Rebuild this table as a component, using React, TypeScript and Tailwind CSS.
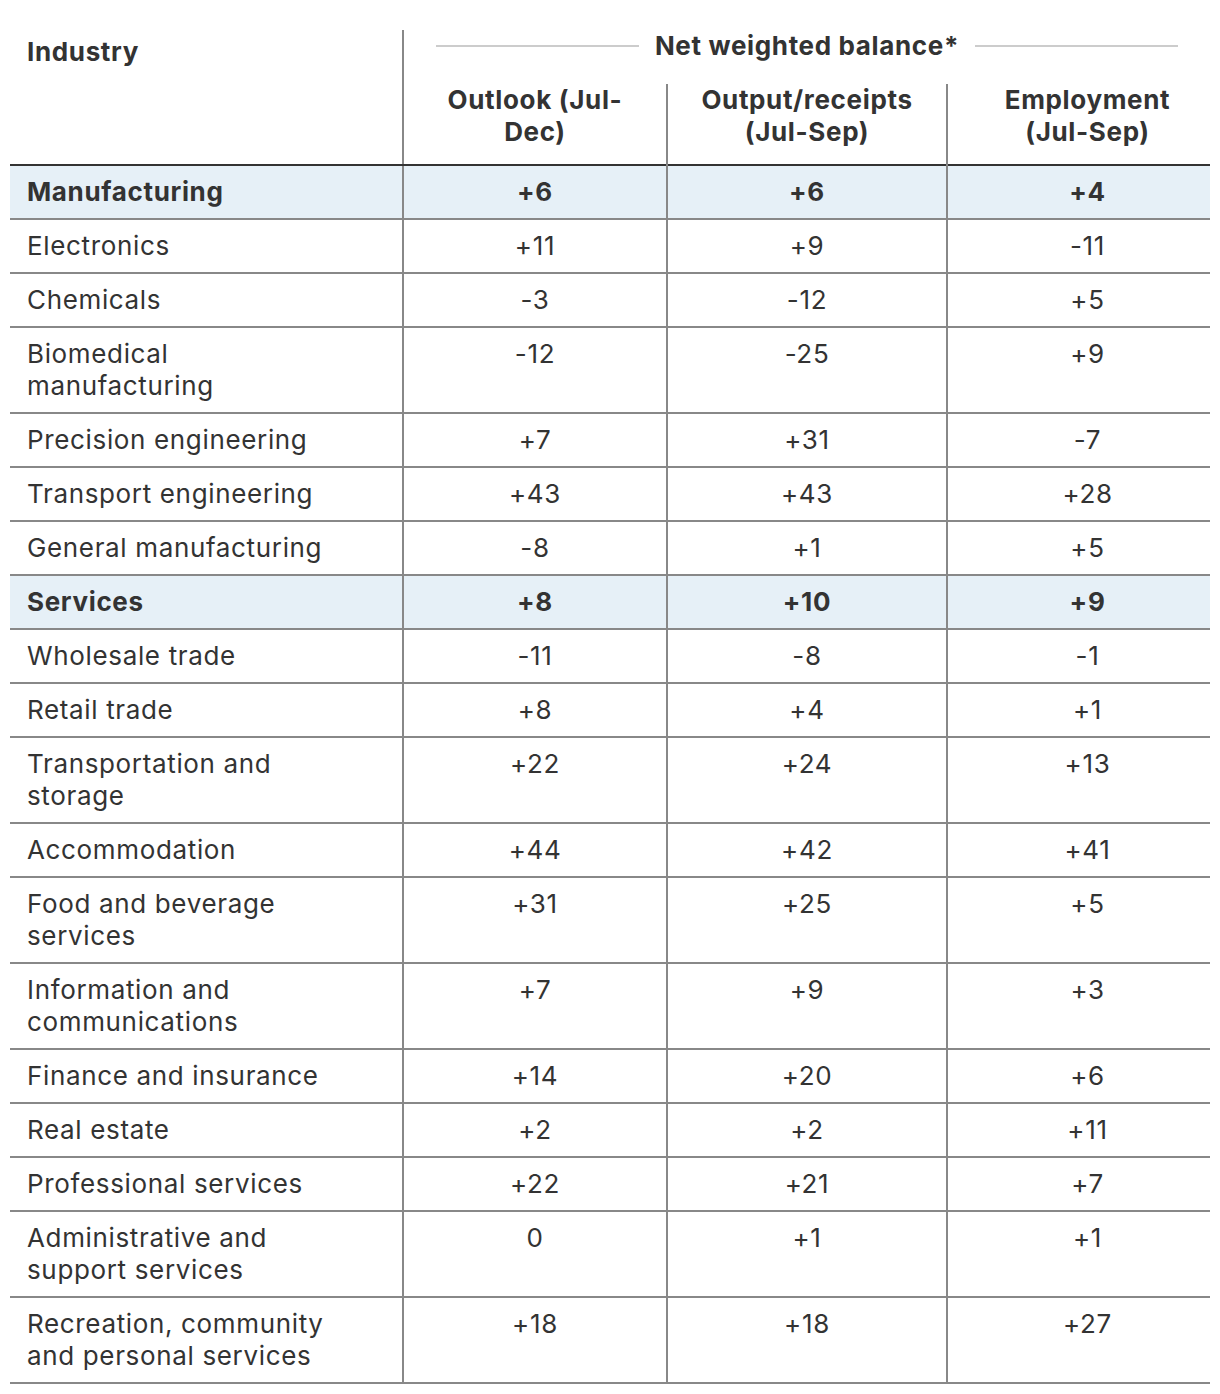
import React from 'react';

type Row = {
  name: string;
  values: [string, string, string];
  group?: boolean;
};

// names carry their own line breaks so wrapping matches the source table
const rows: Row[] = [
  { name: 'Manufacturing', values: ['+6', '+6', '+4'], group: true },
  { name: 'Electronics', values: ['+11', '+9', '-11'] },
  { name: 'Chemicals', values: ['-3', '-12', '+5'] },
  { name: 'Biomedical\nmanufacturing', values: ['-12', '-25', '+9'] },
  { name: 'Precision engineering', values: ['+7', '+31', '-7'] },
  { name: 'Transport engineering', values: ['+43', '+43', '+28'] },
  { name: 'General manufacturing', values: ['-8', '+1', '+5'] },
  { name: 'Services', values: ['+8', '+10', '+9'], group: true },
  { name: 'Wholesale trade', values: ['-11', '-8', '-1'] },
  { name: 'Retail trade', values: ['+8', '+4', '+1'] },
  { name: 'Transportation and\nstorage', values: ['+22', '+24', '+13'] },
  { name: 'Accommodation', values: ['+44', '+42', '+41'] },
  { name: 'Food and beverage\nservices', values: ['+31', '+25', '+5'] },
  { name: 'Information and\ncommunications', values: ['+7', '+9', '+3'] },
  { name: 'Finance and insurance', values: ['+14', '+20', '+6'] },
  { name: 'Real estate', values: ['+2', '+2', '+11'] },
  { name: 'Professional services', values: ['+22', '+21', '+7'] },
  { name: 'Administrative and\nsupport services', values: ['0', '+1', '+1'] },
  { name: 'Recreation, community\nand personal services', values: ['+18', '+18', '+27'] },
];

export default function App() {
  return (
    <div className="min-h-[1394px] bg-white pt-[30px] px-[10px] text-[#333] text-[26px] leading-[32px] tracking-[0.025em] font-['Inter','Noto_Sans',sans-serif]">
      <table className="w-[1200px] table-fixed border-collapse">
        <colgroup>
          <col className="w-[393px]" />
          <col className="w-[264px]" />
          <col className="w-[280px]" />
          <col className="w-[263px]" />
        </colgroup>
        <thead>
          <tr>
            <th
              rowSpan={2}
              className="border-r-2 border-r-[#888] border-b-2 border-b-[#333] pl-[17px] pt-[6px] text-left align-top font-bold"
            >
              Industry
            </th>
            <th colSpan={3} className="h-[54px] p-0 align-top font-bold">
              <div className="flex items-center gap-4 px-[32px]">
                <span className="h-[2px] flex-1 bg-[#ccc]" />
                <span>Net weighted balance*</span>
                <span className="h-[2px] flex-1 bg-[#ccc]" />
              </div>
            </th>
          </tr>
          <tr className="border-b-2 border-b-[#333]">
            <th className="h-[81px] p-0 align-top font-bold">
              Outlook (Jul-
              <br />
              Dec)
            </th>
            <th className="border-l-2 border-l-[#888] p-0 align-top font-bold">
              Output/receipts
              <br />
              (Jul-Sep)
            </th>
            <th className="border-l-2 border-l-[#888] py-0 pl-[17px] pr-0 align-top font-bold">
              Employment
              <br />
              (Jul-Sep)
            </th>
          </tr>
        </thead>
        <tbody>
          {rows.map((row) => (
            <tr
              key={row.name}
              className={`border-b-2 border-b-[#888] ${row.group ? 'bg-[#e6f0f7] font-bold' : ''}`}
            >
              <td className="whitespace-pre-line border-r-2 border-r-[#888] py-[10px] pl-[17px] pr-2 align-top">
                {row.name}
              </td>
              <td className="border-r-2 border-r-[#888] py-[10px] text-center align-top">
                {row.values[0]}
              </td>
              <td className="border-r-2 border-r-[#888] py-[10px] text-center align-top">
                {row.values[1]}
              </td>
              <td className="py-[10px] pl-[17px] text-center align-top">
                {row.values[2]}
              </td>
            </tr>
          ))}
        </tbody>
      </table>
    </div>
  );
}
